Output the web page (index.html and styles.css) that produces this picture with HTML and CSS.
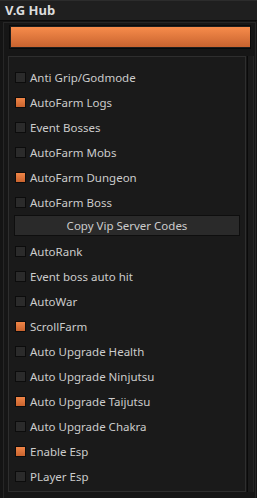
FILE: index.html
```html
<!DOCTYPE html>
<html lang="en">
<head>
    <meta charset="UTF-8">
    <title>V.G Hub</title>
    <link rel="stylesheet" href="styles.css">
</head>
<body>
    <div class="titlebar">V.G Hub</div>
    <div class="frame">
        <div class="bar"><div class="bar-fill"></div></div>
        <div class="body-row">
            <div class="panel">
                <div class="row"><span class="box"></span>Anti Grip/Godmode</div>
                <div class="row"><span class="box on"></span>AutoFarm Logs</div>
                <div class="row"><span class="box"></span>Event Bosses</div>
                <div class="row"><span class="box"></span>AutoFarm Mobs</div>
                <div class="row"><span class="box on"></span>AutoFarm Dungeon</div>
                <div class="row"><span class="box"></span>AutoFarm Boss</div>
                <button class="button">Copy Vip Server Codes</button>
                <div class="row"><span class="box"></span>AutoRank</div>
                <div class="row"><span class="box"></span>Event boss auto hit</div>
                <div class="row"><span class="box"></span>AutoWar</div>
                <div class="row"><span class="box on"></span>ScrollFarm</div>
                <div class="row"><span class="box"></span>Auto Upgrade Health</div>
                <div class="row"><span class="box"></span>Auto Upgrade Ninjutsu</div>
                <div class="row"><span class="box on"></span>Auto Upgrade Taijutsu</div>
                <div class="row"><span class="box"></span>Auto Upgrade Chakra</div>
                <div class="row"><span class="box on"></span>Enable Esp</div>
                <div class="row"><span class="box"></span>PLayer Esp</div>
            </div>
            <div class="rail"></div>
        </div>
    </div>
</body>
</html>
```

FILE: styles.css
```css
body {
    margin: 0;
    width: 257px;
    height: 498px;
    overflow: hidden;
    background-color: #141414;
    font-family: "Noto Sans", "Open Sans", sans-serif;
    color: #cfcfcf;
}
.titlebar {
    box-sizing: border-box;
    height: 21px;
    line-height: 19px;
    padding-left: 5px;
    background-color: #1f1f1f;
    border-top: 1px solid #2c2c2c;
    border-bottom: 1px solid #0b0b0b;
    font-size: 13px;
    font-weight: bold;
    color: #dcdcdc;
}
.frame {
    margin: 1px 1px 0 3px;
    height: 480px;
    border: 1px solid #262626;
    border-bottom: none;
    background-color: #161616;
    padding: 2px 0 0 5px;
}
.bar {
    box-sizing: border-box;
    width: 242px;
    height: 24px;
    border: 1px solid #0a0a0a;
    background-color: #1d1d1d;
    padding: 1px 0 1px 1px;
}
.bar-fill {
    height: 100%;
    background: linear-gradient(#f78c4b, #c8632f);
}
.body-row {
    display: flex;
    margin-top: 7px;
    margin-left: -1px;
}
.panel {
    width: 238px;
    height: 436px;
    box-sizing: border-box;
    border: 1px solid #2e2e2e;
    background-color: #1a1a1a;
    padding-top: 8px;
}
.row {
    display: flex;
    align-items: center;
    gap: 4px;
    height: 25px;
    padding-left: 6px;
    font-size: 11.5px;
    color: #cccccc;
}
.box {
    width: 11px;
    height: 11px;
    box-sizing: border-box;
    border: 1px solid #0c0c0c;
    background-color: #2b2b2b;
}
.box.on {
    background: linear-gradient(#f08547, #c9642f);
}
.button {
    display: block;
    width: 226px;
    height: 21px;
    margin: 0 0 3px 5px;
    padding: 0;
    border: 1px solid #0e0e0e;
    background-color: #2a2a2a;
    font-family: inherit;
    font-size: 11.5px;
    color: #cccccc;
}
.rail {
    width: 5px;
    margin-left: 1px;
    height: 436px;
    border-left: 1px solid #0a0a0a;
    border-right: 1px solid #262626;
    background-color: #1b1b1b;
}
```
